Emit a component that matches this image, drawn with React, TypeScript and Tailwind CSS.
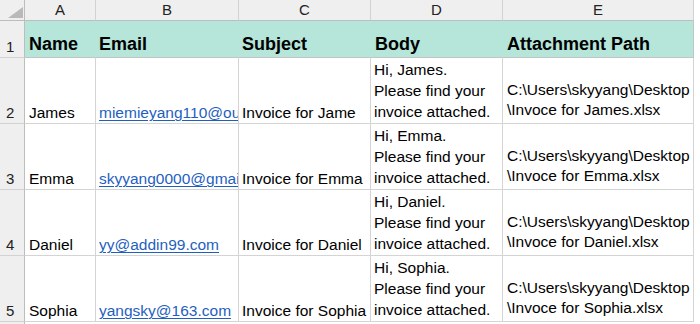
import React from 'react';

type Row = {
  num: number;
  name: string;
  email: string;
  subject: string;
  body: string[];
  path: string[];
};

const rows: Row[] = [
  {
    num: 2,
    name: 'James',
    email: 'miemieyang110@outlook.com',
    subject: 'Invoice for Jame',
    body: ['Hi, James.', 'Please find your', 'invoice attached.'],
    path: ['C:\\Users\\skyyang\\Desktop', '\\Invoce for James.xlsx'],
  },
  {
    num: 3,
    name: 'Emma',
    email: 'skyyang0000@gmail.com',
    subject: 'Invoice for Emma',
    body: ['Hi, Emma.', 'Please find your', 'invoice attached.'],
    path: ['C:\\Users\\skyyang\\Desktop', '\\Invoce for Emma.xlsx'],
  },
  {
    num: 4,
    name: 'Daniel',
    email: 'yy@addin99.com',
    subject: 'Invoice for Daniel',
    body: ['Hi, Daniel.', 'Please find your', 'invoice attached.'],
    path: ['C:\\Users\\skyyang\\Desktop', '\\Invoce for Daniel.xlsx'],
  },
  {
    num: 5,
    name: 'Sophia',
    email: 'yangsky@163.com',
    subject: 'Invoice for Sophia',
    body: ['Hi, Sophia.', 'Please find your', 'invoice attached.'],
    path: ['C:\\Users\\skyyang\\Desktop', '\\Invoce for Sophia.xlsx'],
  },
];

const colLetters = ['A', 'B', 'C', 'D', 'E'];
const headers = ['Name', 'Email', 'Subject', 'Body', 'Attachment Path'];

// shared cell styles
const colHead = 'bg-[#efefef] border-r border-b border-r-[#d2d2d2] border-b-[#bdbdbd] flex items-center justify-center text-[15px] text-[#222]';
const rowHead = 'bg-[#efefef] border-r border-b border-r-[#bdbdbd] border-b-[#d2d2d2] flex items-end pl-[6px] text-[15px] leading-[20px] text-[#222]';
const cell = 'border-r border-b border-[#d4d4d4] flex flex-col justify-end px-[3px] overflow-hidden text-[15.5px] text-black';

export default function App() {
  return (
    <div className="w-[700px] h-[324px] bg-white overflow-hidden font-['Liberation_Sans',Arial,sans-serif]">
      <div className="grid grid-cols-[25px_71px_143px_132px_132px_191px] grid-rows-[21px_37px_66px_66px_66px_66px_2px]">
        {/* corner */}
        <div className="bg-[#efefef] border-r border-b border-r-[#bdbdbd] border-b-[#bdbdbd] flex items-end justify-end pr-[1px] pb-[2px]">
          <svg width="16" height="11" viewBox="0 0 16 11">
            <polygon points="16,0 16,11 1,11" fill="#b9b9b9" />
          </svg>
        </div>
        {colLetters.map((l) => (
          <div key={l} className={colHead}>
            {l}
          </div>
        ))}

        {/* header row */}
        <div className={rowHead}>1</div>
        {headers.map((h, i) => (
          <div
            key={h}
            className={`bg-[#b5e6d9] border-b border-b-[#c4c4c4] border-r flex items-end px-[3px] pb-[3px] text-[18px] leading-[20px] font-bold text-black whitespace-nowrap ${
              i === headers.length - 1 ? 'border-r-[#c4c4c4] pl-[4px]' : 'border-r-[#b5e6d9]'
            } ${i === 0 || i === 3 ? 'pl-[4px]' : ''}`}
          >
            {h}
          </div>
        ))}

        {/* data rows */}
        {rows.map((r) => (
          <React.Fragment key={r.num}>
            <div className={rowHead}>{r.num}</div>
            <div className={`${cell} pl-[4px] leading-[20px] whitespace-nowrap`}>{r.name}</div>
            <div className={`${cell} leading-[20px] whitespace-nowrap`}>
              <span className="block overflow-hidden -mr-[3px] text-[#1f5fbf] underline underline-offset-2 decoration-1">{r.email}</span>
            </div>
            <div className={`${cell} leading-[20px] whitespace-nowrap`}>{r.subject}</div>
            <div className={`${cell} leading-[21px] pb-[1px] whitespace-nowrap`}>
              {r.body.map((t) => (
                <div key={t}>{t}</div>
              ))}
            </div>
            <div className={`${cell} pl-[4px] leading-[20px] pb-[3px] whitespace-nowrap`}>
              {r.path.map((t) => (
                <div key={t}>{t}</div>
              ))}
            </div>
          </React.Fragment>
        ))}

        {/* sliver below last row */}
        <div className="bg-[#efefef] border-r border-r-[#bdbdbd]" />
      </div>
    </div>
  );
}
